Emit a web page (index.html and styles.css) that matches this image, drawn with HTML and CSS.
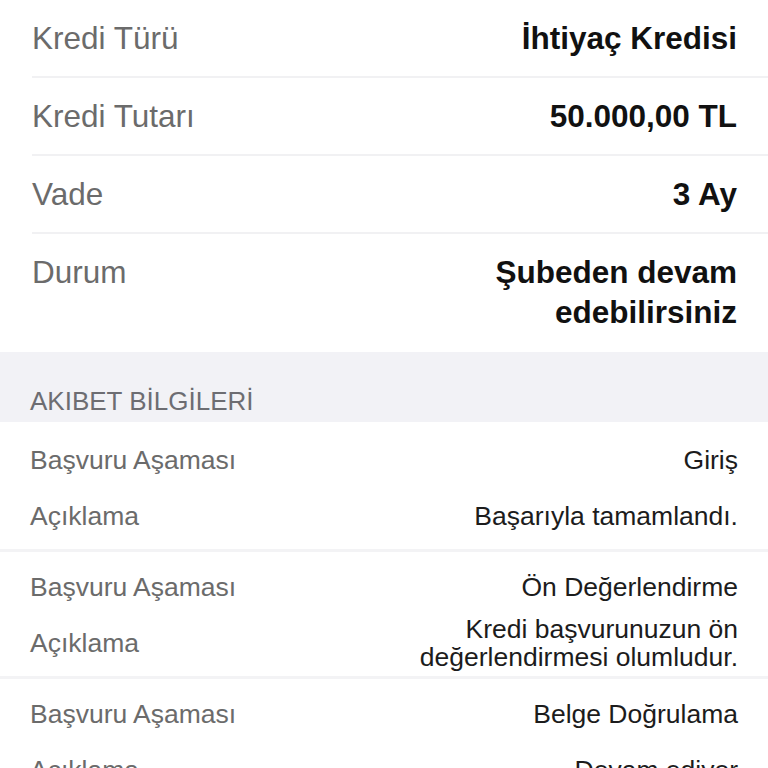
FILE: index.html
```html
<!DOCTYPE html>
<html lang="tr">
<head>
    <meta charset="UTF-8">
    <meta name="viewport" content="width=device-width, initial-scale=1.0">
    <title>Kredi Başvuru Detayı</title>
    <link rel="stylesheet" href="styles.css">
</head>
<body>
    <div class="summary">
        <div class="summary-row">
            <span class="label">Kredi Türü</span>
            <span class="value">İhtiyaç Kredisi</span>
        </div>
        <div class="summary-row">
            <span class="label">Kredi Tutarı</span>
            <span class="value">50.000,00 TL</span>
        </div>
        <div class="summary-row">
            <span class="label">Vade</span>
            <span class="value">3 Ay</span>
        </div>
        <div class="summary-row last">
            <span class="label">Durum</span>
            <span class="value">Şubeden devam<br>edebilirsiniz</span>
        </div>
    </div>

    <div class="section-header">AKIBET BİLGİLERİ</div>

    <div class="steps">
        <div class="step">
            <div class="step-row">
                <span class="step-label">Başvuru Aşaması</span>
                <span class="step-value">Giriş</span>
            </div>
            <div class="step-row">
                <span class="step-label">Açıklama</span>
                <span class="step-value">Başarıyla tamamlandı.</span>
            </div>
        </div>
        <div class="step">
            <div class="step-row">
                <span class="step-label">Başvuru Aşaması</span>
                <span class="step-value">Ön Değerlendirme</span>
            </div>
            <div class="step-row">
                <span class="step-label">Açıklama</span>
                <span class="step-value">Kredi başvurunuzun ön<br>değerlendirmesi olumludur.</span>
            </div>
        </div>
        <div class="step">
            <div class="step-row">
                <span class="step-label">Başvuru Aşaması</span>
                <span class="step-value">Belge Doğrulama</span>
            </div>
            <div class="step-row">
                <span class="step-label">Açıklama</span>
                <span class="step-value">Devam ediyor</span>
            </div>
        </div>
    </div>
</body>
</html>
```

FILE: styles.css
```css
html, body {
    margin: 0;
    padding: 0;
}
body {
    font-family: "Liberation Sans", Arial, sans-serif;
    background-color: #fff;
    height: 768px;
    overflow: hidden;
}
.summary {
    padding-left: 32px;
}
.summary-row {
    display: flex;
    justify-content: space-between;
    align-items: flex-start;
    padding: 18px 31px 18px 0;
    border-bottom: 2px solid #f1f1f3;
    font-size: 31.5px;
    line-height: 40px;
}
.summary-row.last {
    border-bottom: none;
    padding-bottom: 20px;
}
.label {
    color: #6b6b6b;
}
.value {
    color: #111;
    font-size: 31.5px;
    font-weight: bold;
    text-align: right;
}
.section-header {
    background-color: #f2f2f6;
    color: #6d6d72;
    font-size: 26px;
    line-height: 28px;
    padding: 35px 30px 7px;
}
.steps {
    padding-top: 4px;
}
.step {
    padding: 6px 30px 5px;
    border-bottom: 3px solid #f3f3f5;
}
.step + .step {
    padding-top: 7px;
}
.step-row {
    display: flex;
    justify-content: space-between;
    align-items: center;
    min-height: 56px;
    font-size: 26.5px;
    line-height: 28px;
}
.step-label {
    color: #6b6b6b;
}
.step-value {
    color: #1c1c1c;
    text-align: right;
}
```
